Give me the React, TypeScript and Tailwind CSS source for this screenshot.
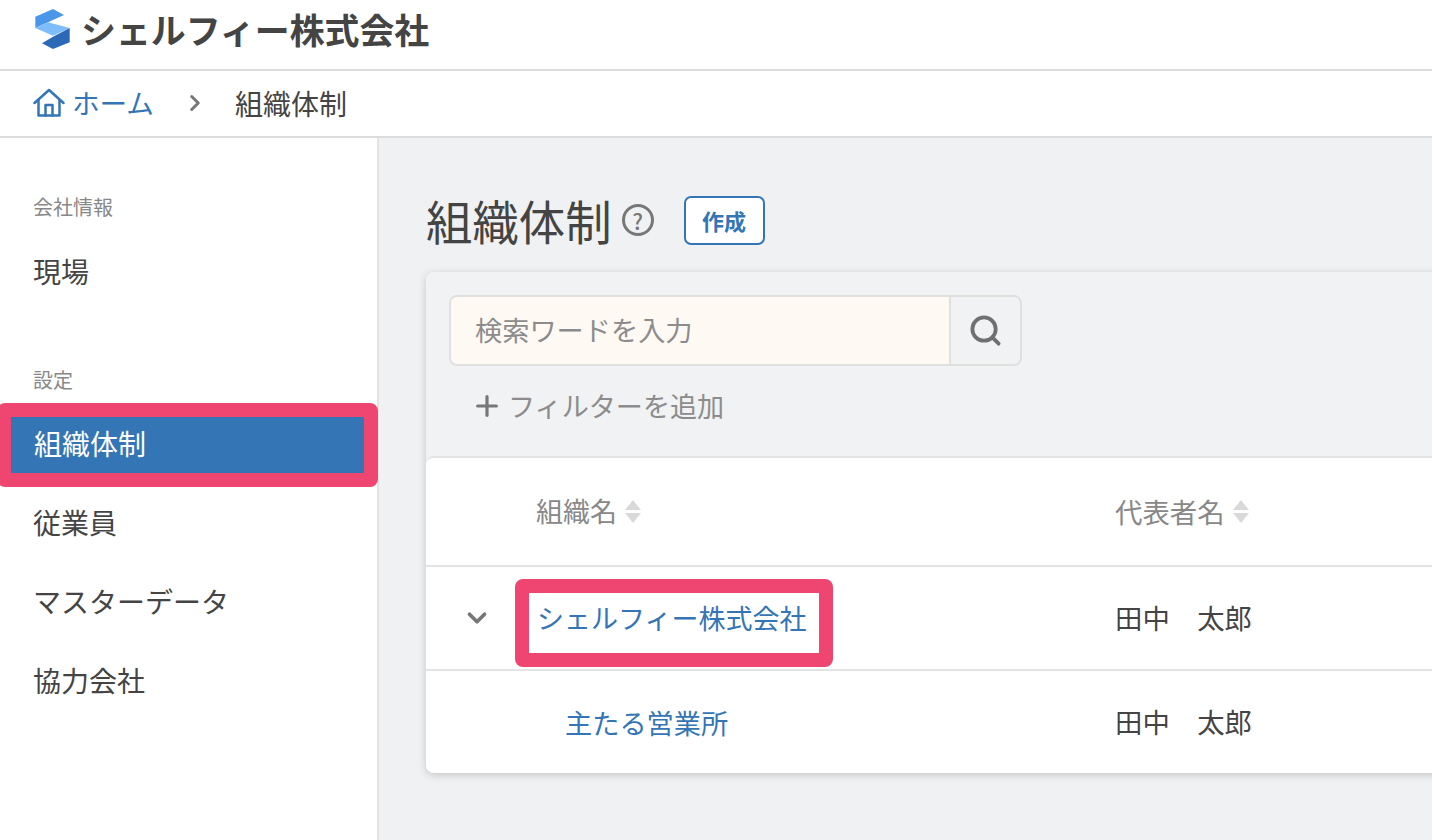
import { ChevronDown, ChevronRight, Plus, Search } from 'lucide-react'

const font = { fontFamily: '"Noto Sans CJK JP", "Noto Sans", sans-serif' }

function Logo() {
  return (
    <svg width="38" height="42" viewBox="0 0 38 42">
      <path d="M1.3 8.7 L19 1 L30 7 L14 14.3 L1.3 20 Z" fill="#4a97ea" />
      <path d="M14 14.3 L35.7 20 L19 27.7 L1.3 20 Z" fill="#7dbdf9" />
      <path d="M35.7 20 L35.7 34.3 L19 41 L8 35.3 L19 28.7 Z" fill="#2b68b8" />
    </svg>
  )
}

function HomeIcon() {
  return (
    <svg width="32" height="30" viewBox="0 0 32 30" fill="none" stroke="#3475b5" strokeWidth="2.5" strokeLinejoin="round" strokeLinecap="round">
      <path d="M1.5 15 L16 2 L30.5 15" />
      <path d="M5.5 12 V27.5 H26.5 V12" />
      <path d="M12.5 27.5 V17 H19.5 V27.5" />
    </svg>
  )
}

function SortIcon() {
  return (
    <span className="flex flex-col gap-[3px] ml-[8px]">
      <span className="w-0 h-0 border-x-[8px] border-x-transparent border-b-[10px] border-b-[#d9d9d9]" />
      <span className="w-0 h-0 border-x-[8px] border-x-transparent border-t-[10px] border-t-[#d9d9d9]" />
    </span>
  )
}

export default function App() {
  return (
    <div style={font} className="w-[1432px] h-[840px] overflow-hidden bg-white text-[27.4px] text-[#444] flex flex-col">
      {/* Header */}
      <div className="h-[71px] shrink-0 border-b-2 border-[#dcdcdc] flex items-center pl-[34px] pb-[11px] gap-[9px]">
        <Logo />
        <span className="text-[34.9px] font-bold leading-none whitespace-nowrap">シェルフィー株式会社</span>
      </div>

      {/* Breadcrumb */}
      <div className="h-[67px] shrink-0 border-b-2 border-[#dcdcdc] flex items-center pl-[33px] pb-[2px]">
        <HomeIcon />
        <span className="text-[#3475b5] ml-[7px] text-[27.6px] leading-none">ホーム</span>
        <ChevronRight size={26} strokeWidth={2.8} className="text-[#777] ml-[28px]" />
        <span className="ml-[27px] text-[28px] leading-none">組織体制</span>
      </div>

      <div className="flex flex-1 min-h-0">
        {/* Sidebar */}
        <div className="w-[379px] shrink-0 border-r-2 border-[#e3e3e3] bg-white pt-[54px] text-[28px]">
          <div className="pl-[33px] text-[20px] leading-[30px] text-[#888]">会社情報</div>
          <div className="pl-[33px] mt-[29px] leading-[40px]">現場</div>
          <div className="pl-[33px] mt-[74px] text-[20px] leading-[30px] text-[#888]">設定</div>
          <div className="mt-[8px] -ml-[3px] w-[381px] h-[84px] border-[14px] border-[#ee4670] rounded-[8px] bg-[#3475b5] text-white flex items-center pl-[23px] pb-[4px]">組織体制</div>
          <div className="pl-[33px] mt-[15px] leading-[40px]">従業員</div>
          <div className="pl-[33px] mt-[39px] leading-[40px]">マスターデータ</div>
          <div className="pl-[33px] mt-[39px] leading-[40px]">協力会社</div>
        </div>

        {/* Main */}
        <div className="flex-1 min-w-0 bg-[#f0f1f3] pl-[47px]">
          <div className="h-[134px] pt-[30px] flex items-center">
            <span className="text-[46.4px] leading-none">組織体制</span>
            <span className="ml-[10px] w-[32px] h-[32px] rounded-full border-[3px] border-[#777] text-[#777] text-[22px] font-medium flex items-center justify-center leading-none">?</span>
            <button className="ml-[30px] w-[81px] h-[49px] rounded-[7px] border-2 border-[#3475b5] bg-white text-[#3475b5] text-[22px] font-bold leading-none">作成</button>
          </div>

          <div className="w-[1100px] rounded-[8px] bg-[#f1f2f4] shadow-[0_2px_8px_rgba(0,0,0,0.18)]">
            <div className="pt-[23px] pl-[23px] h-[184px]">
              <div className="flex w-[573px] h-[71px] rounded-[8px] border-2 border-[#e0e0de] overflow-hidden">
                <div className="flex-1 bg-[#fff9f4] flex items-center pl-[24px] pb-[3px] text-[27.2px] text-[#8c8c8c] border-r-2 border-[#e0e0de]">検索ワードを入力</div>
                <div className="w-[69px] flex items-center justify-center text-[#707070]">
                  <Search size={35} strokeWidth={2.6} />
                </div>
              </div>
              <div className="mt-[24px] flex items-center text-[27.1px] text-[#8c8c8c] pl-[22px] leading-none">
                <Plus size={32} strokeWidth={2.4} className="text-[#777]" />
                <span className="ml-[5px]">フィルターを追加</span>
              </div>
            </div>

            <div className="bg-white rounded-[8px] border-t-2 border-[#e4e4e4]">
              <div className="h-[109px] flex items-center border-b-2 border-[#e4e4e4] text-[#888]">
                <div className="w-[689px] pl-[110px] text-[27px] flex items-center">組織名<SortIcon /></div>
                <div className="flex items-center">代表者名<SortIcon /></div>
              </div>
              <div className="h-[104px] flex items-center border-b-2 border-[#e4e4e4]">
                <div className="w-[689px] flex items-center">
                  <ChevronDown size={30} strokeWidth={3} className="text-[#777] ml-[36px]" />
                  <div className="ml-[23px] mt-[10px] w-[318px] h-[88px] border-[14px] border-[#ee4670] rounded-[8px] bg-white text-[27px] text-[#3475b5] flex items-center pl-[8px] pb-[9px] whitespace-nowrap">シェルフィー株式会社</div>
                </div>
                <div className="whitespace-pre">田中　太郎</div>
              </div>
              <div className="h-[102px] flex items-center">
                <div className="w-[689px] pl-[139px] text-[27.2px] text-[#3475b5]">主たる営業所</div>
                <div className="whitespace-pre">田中　太郎</div>
              </div>
            </div>
          </div>
        </div>
      </div>
    </div>
  )
}
